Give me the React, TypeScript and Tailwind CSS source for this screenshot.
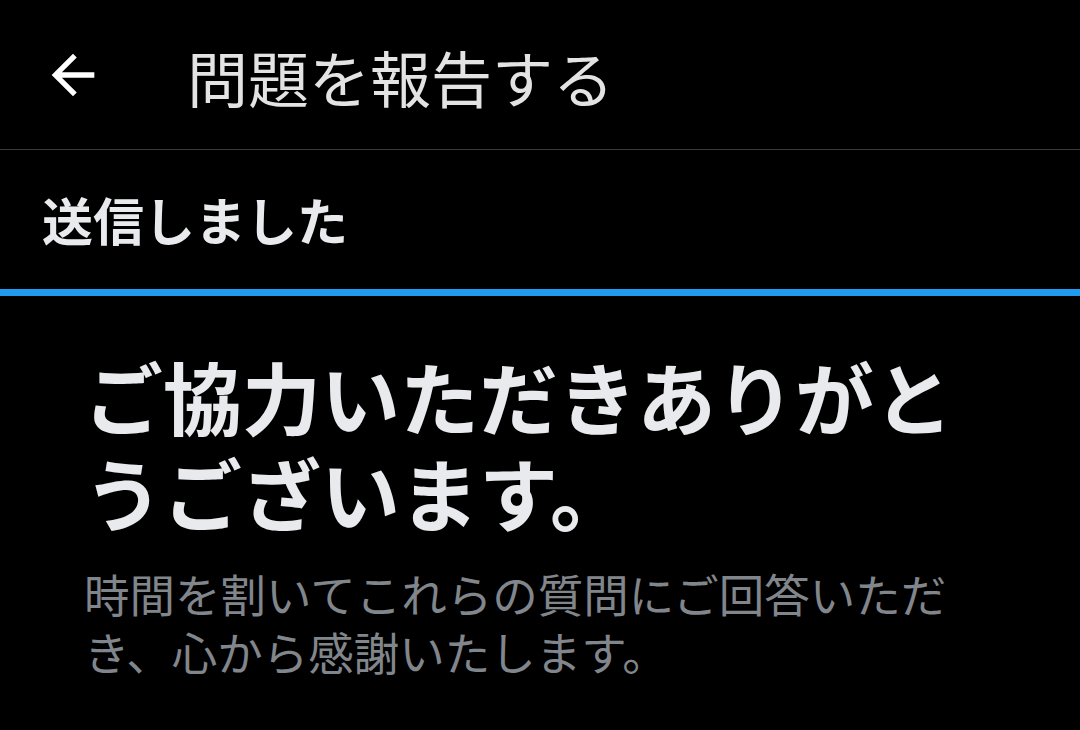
import React from 'react';

const jp = { fontFamily: '"Noto Sans CJK JP", "Noto Sans", sans-serif' };

const BackArrow: React.FC = () => (
  <svg viewBox="0 0 24 24" className="h-[64px] w-[64px] shrink-0" fill="#ffffff">
    <path d="M20 11H7.83l5.59-5.59L12 4l-8 8 8 8 1.41-1.41L7.83 13H20v-2z" />
  </svg>
);

export default function App() {
  return (
    <div className="w-[1080px] h-[730px] bg-black overflow-hidden" style={jp}>
      {/* top bar */}
      <div className="flex items-center h-[150px] pl-[41px] border-b border-[#3a3a3a]">
        <BackArrow />
        <h1 className="ml-[82px] pt-[4px] text-[61px] leading-none text-[#e3e3e3] font-normal">問題を報告する</h1>
      </div>

      {/* status */}
      <div className="flex items-center h-[139px] px-[42px]">
        <span className="text-[51px] font-bold text-[#e8eaed] leading-none">送信しました</span>
      </div>
      <div className="h-[7px] bg-[#1f9cf0]" />

      {/* message */}
      <div className="pl-[84px] pt-[52px]">
        <h2 className="w-[900px] text-[79px] leading-[96px] font-bold text-[#e8eaed]">
          ご協力いただきありがとうございます。
        </h2>
        <p className="w-[900px] mt-[24px] text-[45.5px] leading-[58px] text-[#80868b]">
          時間を割いてこれらの質問にご回答いただき、心から感謝いたします。
        </p>
      </div>
    </div>
  );
}
